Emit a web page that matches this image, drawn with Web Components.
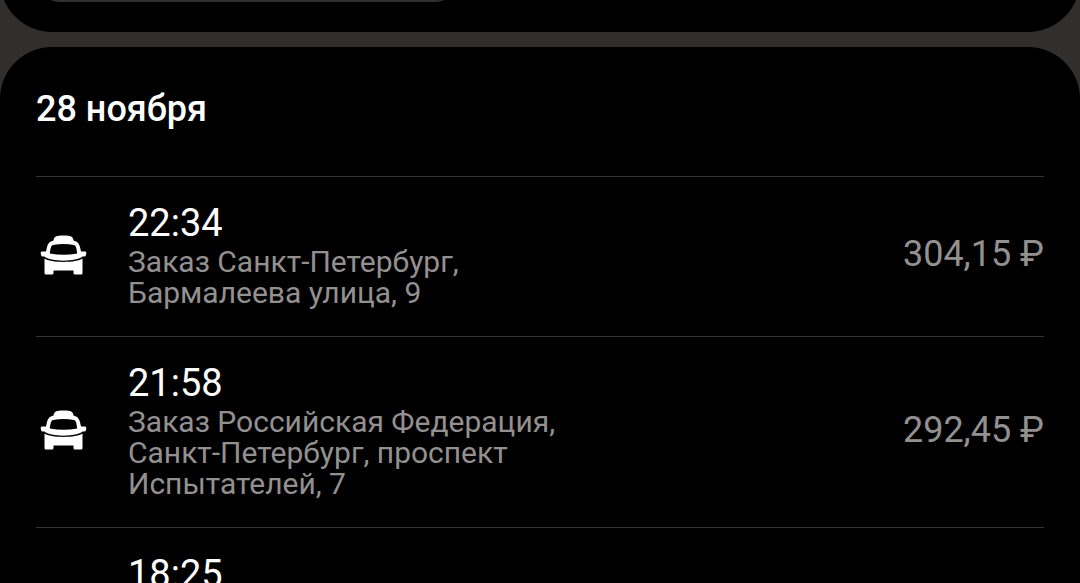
<!DOCTYPE html>
<html lang="ru">
<head>
<meta charset="utf-8">
<title>История заказов</title>
<style>
body { margin: 0; background: #302f2d; }
</style>
</head>
<body>
<history-page>
  <history-card>
    <chip-placeholder></chip-placeholder>
  </history-card>
  <history-card>
    <h2 slot="title">28 ноября</h2>
    <order-row time="22:34" price="304,15 ₽">Заказ Санкт-Петербург, Бармалеева улица, 9</order-row>
    <order-row time="21:58" price="292,45 ₽">Заказ Российская Федерация, Санкт-Петербург, проспект Испытателей, 7</order-row>
    <order-row time="18:25"></order-row>
  </history-card>
</history-page>

<script>
class HistoryPage extends HTMLElement {
  constructor() {
    super();
    this.attachShadow({ mode: 'open' }).innerHTML = `
      <style>
        :host {
          display: flex; flex-direction: column; gap: 15px;
          height: 100vh; overflow: hidden;
          font-family: Roboto, "Noto Sans", sans-serif; color: #fff;
        }
        ::slotted(*) { flex: none; }
        ::slotted(:first-child) { margin-top: -88px; }
      </style>
      <slot></slot>`;
  }
}

class HistoryCard extends HTMLElement {
  constructor() {
    super();
    this.attachShadow({ mode: 'open' }).innerHTML = `
      <style>
        :host { display: block; background: #000; border-radius: 52px; padding: 0 36px 30px; }
        ::slotted(h2) { margin: 0; padding: 39px 0 44px; font-size: 36px; line-height: 46px; font-weight: 500; }
      </style>
      <slot name="title"></slot>
      <slot></slot>`;
  }
}

class ChipPlaceholder extends HTMLElement {
  constructor() {
    super();
    this.attachShadow({ mode: 'open' }).innerHTML = `
      <style>
        :host { display: block; width: 42%; height: 90px; border-radius: 24px; background: #302f2d; }
      </style>`;
  }
}

class TaxiIcon extends HTMLElement {
  constructor() {
    super();
    this.attachShadow({ mode: 'open' }).innerHTML = `
      <style>
        :host { display: block; width: 48px; height: 40px; }
        svg { display: block; }
      </style>
      <svg width="48" height="40" viewBox="0 0 48 40" fill="#fff" aria-hidden="true">
        <path fill-rule="evenodd" d="M14.500 5.500C15 1.500 17 .5 24.500 .5S34 1.500 34.500 5.500C38.500 6.500 40 8.500 41 12L42 16.500H46Q47.500 16.500 47.300 18L47 20Q46.800 21.500 45 21.500H43.500C38 27 11 27 5.500 21.500H4Q2.200 21.500 2 20L1.700 18Q1.500 16.500 3 16.500H7L8 12C9 8.500 10.500 6.500 14.500 5.500ZM10.800 18.500Q24.500 21 38.200 18.500C37.500 13 37 10.600 35 10Q24.500 8 14 10C12 10.600 11.500 13 10.800 18.500Z"/>
        <path d="M5.500 23.500C11 28 38 28 43.500 23.500V38Q43.500 39.500 42 39.500H36Q34.500 39.500 34.500 38V35.500H14.500V38Q14.500 39.500 13 39.500H7Q5.500 39.500 5.500 38Z"/>
      </svg>`;
  }
}

class OrderRow extends HTMLElement {
  constructor() {
    super();
    this.attachShadow({ mode: 'open' });
  }
  connectedCallback() {
    const price = this.getAttribute('price');
    this.shadowRoot.innerHTML = `
      <style>
        :host {
          display: flex; align-items: center;
          border-top: 1px solid #333; padding: 24px 0 28px;
        }
        .icon { flex: none; width: 92px; padding-left: 3px; box-sizing: border-box; }
        .text { flex: 1; }
        time { display: block; font-size: 38px; line-height: 45px; }
        .address { max-width: 440px; font-size: 30px; line-height: 31px; min-height: 62px; color: #939190; }
        .price { font-size: 36px; line-height: 45px; color: #939190; white-space: nowrap; }
      </style>
      <div class="icon">${price ? '<taxi-icon></taxi-icon>' : ''}</div>
      <div class="text">
        <time>${this.getAttribute('time')}</time>
        <div class="address"><slot></slot></div>
      </div>
      ${price ? `<div class="price">${price}</div>` : ''}`;
  }
}

customElements.define('history-page', HistoryPage);
customElements.define('history-card', HistoryCard);
customElements.define('chip-placeholder', ChipPlaceholder);
customElements.define('taxi-icon', TaxiIcon);
customElements.define('order-row', OrderRow);
</script>
</body>
</html>
